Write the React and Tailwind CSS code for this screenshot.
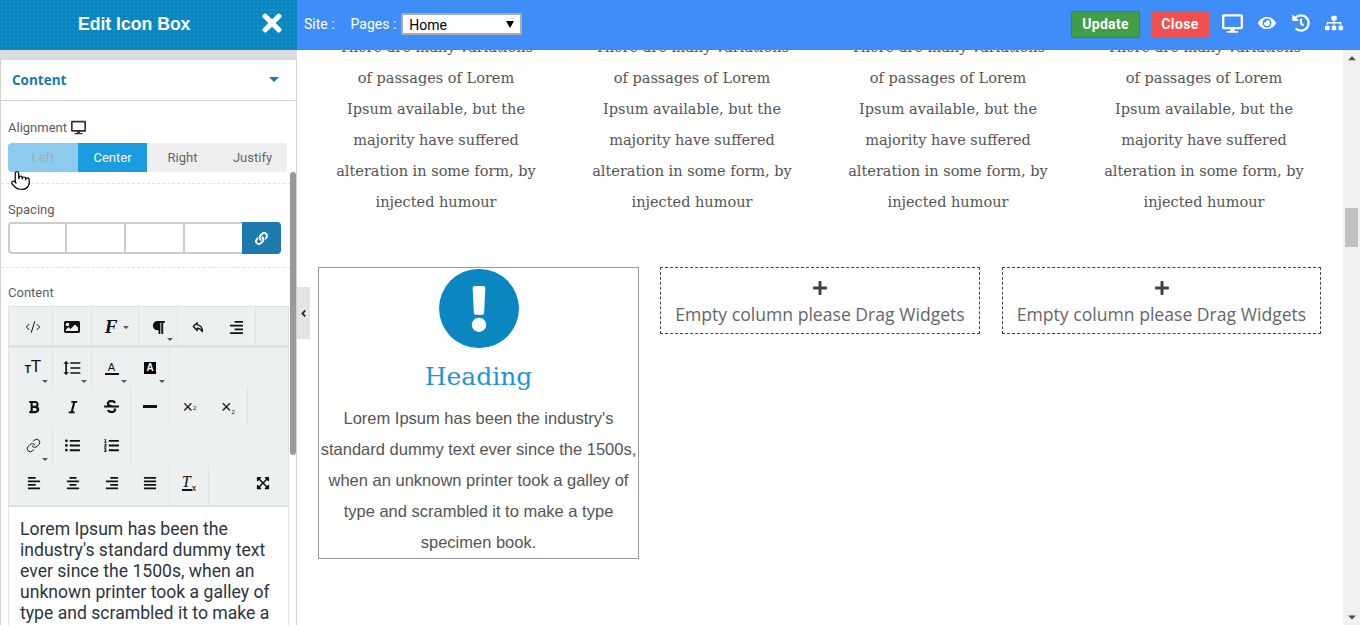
import { Code2, Pointer, Link as LinkIcon } from 'lucide-react'
import {
  FaTimes, FaDesktop, FaEye, FaHistory, FaSitemap, FaLink, FaImage, FaParagraph,
  FaAlignLeft, FaAlignCenter, FaAlignRight, FaAlignJustify, FaBold, FaItalic, FaStrikethrough,
  FaListUl, FaListOl, FaExpandArrowsAlt, FaPlus, FaExclamation, FaCaretDown, FaCaretUp, FaAngleLeft
} from 'react-icons/fa'
import { MdFormatLineSpacing } from 'react-icons/md'

const slabLines = [
  'There are many variations',
  'of passages of Lorem',
  'Ipsum available, but the',
  'majority have suffered',
  'alteration in some form, by',
  'injected humour',
]

const bodyLines = [
  "Lorem Ipsum has been the industry's",
  'standard dummy text ever since the 1500s,',
  'when an unknown printer took a galley of',
  'type and scrambled it to make a type',
  'specimen book.',
]

function Caret() {
  return <span className="absolute right-[4px] bottom-[4px] w-0 h-0 border-x-[3px] border-x-transparent border-t-[3px] border-t-[#555]" />
}

function Tool({ children, sep, wide, caret, className = '' }) {
  return (
    <div className={`relative flex items-center justify-center h-full text-[#111] ${wide ? 'w-[47px]' : 'w-[39px]'} ${sep ? 'border-r border-[#dfe2e2]' : ''} ${className}`}>
      {children}
      {caret && <Caret />}
    </div>
  )
}

function ToolRow({ children, className = '' }) {
  return <div className={`flex pl-[5px] h-[39px] ${className}`}>{children}</div>
}

function Toolbar() {
  return (
    <div className="mt-[6px] mx-[7px] w-[281px] bg-[#ecf0f1] border border-[#dfe2e2] border-b-0">
      <ToolRow className="border-b-[3px] border-[#dfe2e2] h-[41px]">
        <Tool sep className="pt-[2px]"><Code2 size={16} strokeWidth={1.5} /></Tool>
        <Tool sep className="pt-[2px]"><FaImage size={16} /></Tool>
        <Tool sep wide className="pt-[2px]">
          <span className="-ml-[8px] font-['Liberation_Serif',serif] italic font-bold text-[19px]">F</span>
          <span className="absolute right-[9px] top-[19px] w-0 h-0 border-x-[3px] border-x-transparent border-t-[3px] border-t-[#555]" />
        </Tool>
        <Tool sep caret className="pt-[2px]"><FaParagraph size={15} /></Tool>
        <Tool className="pt-[2px]">
          <svg width="12" height="12" viewBox="0 0 14 14" fill="none" stroke="currentColor" strokeWidth="1.6" strokeLinejoin="round">
            <path d="M6 2 L1.5 6.5 L6 11 V8.5 C8.5 8.5 10.5 9.5 12 12.5 C12.5 8 10 4.8 6 4.5 Z" />
          </svg>
        </Tool>
        <Tool sep className="pt-[2px]"><FaAlignRight size={15} /></Tool>
      </ToolRow>
      <ToolRow className="h-[37px]">
        <Tool sep caret>
          <span className="font-['Liberation_Sans',sans-serif] leading-none flex items-end -mt-[3px]">
            <span className="text-[10px] font-bold">T</span><span className="text-[17px]">T</span>
          </span>
        </Tool>
        <Tool sep caret><MdFormatLineSpacing size={20} /></Tool>
        <Tool caret>
          <span className="flex flex-col items-center font-['Liberation_Sans',sans-serif] text-[11px] leading-[12px] border-b-2 border-[#111] w-[14px]">A</span>
        </Tool>
        <Tool sep caret>
          <span className="flex items-center justify-center w-[12px] h-[12px] bg-black text-white font-bold font-['Liberation_Sans',sans-serif] text-[10px]">A</span>
        </Tool>
      </ToolRow>
      <ToolRow>
        <Tool><FaBold size={14} /></Tool>
        <Tool><FaItalic size={14} /></Tool>
        <Tool sep><FaStrikethrough size={15} /></Tool>
        <Tool sep><span className="w-[14px] h-[3px] bg-[#111]" /></Tool>
        <Tool>
          <span className="font-['Liberation_Sans',sans-serif] text-[18px] leading-none">×<sup className="text-[6px]">2</sup></span>
        </Tool>
        <Tool sep>
          <span className="font-['Liberation_Sans',sans-serif] text-[18px] leading-none">×<sub className="text-[6px]">2</sub></span>
        </Tool>
      </ToolRow>
      <ToolRow>
        <Tool sep caret><LinkIcon size={15} strokeWidth={1.6} /></Tool>
        <Tool><FaListUl size={15} /></Tool>
        <Tool sep><FaListOl size={15} /></Tool>
      </ToolRow>
      <ToolRow className="h-[40px]">
        <Tool className="pb-[4px]"><FaAlignLeft size={14} /></Tool>
        <Tool className="pb-[4px]"><FaAlignCenter size={14} /></Tool>
        <Tool className="pb-[4px]"><FaAlignRight size={14} /></Tool>
        <Tool sep className="pb-[4px]"><FaAlignJustify size={14} /></Tool>
        <Tool sep className="pb-[4px]">
          <span className="font-['Liberation_Serif',serif] italic text-[16px] leading-[14px] border-b-2 border-[#111] pr-[1px]">T</span>
          <span className="text-[9px] leading-none mt-[10px]">x</span>
        </Tool>
        <Tool className="ml-auto mr-[6px] pb-[4px]"><FaExpandArrowsAlt size={14} /></Tool>
      </ToolRow>
    </div>
  )
}

function Sidebar() {
  return (
    <aside className="relative w-[297px] shrink-0 h-[625px] overflow-hidden font-['Roboto',sans-serif]">
      <div className="h-[50px] pb-[2px] flex items-center bg-[#0786c2] bg-[radial-gradient(rgba(255,255,255,0.07)_1px,transparent_1px)] bg-[length:4px_4px] text-white">
        <h1 className="flex-1 pl-[78px] text-[17.6px] font-bold font-['Liberation_Sans',sans-serif]">Edit Icon Box</h1>
        <FaTimes size={28} className="mr-[11px] mb-[2px]" />
      </div>
      <div className="h-[10px] bg-[#dcdcdc]" />
      <div className="border-x border-[#d0d0d0] h-[565px]">
        <div className="h-[41px] flex items-center justify-between pl-[11px] pr-[17px] border-b border-[#d0d0d0]">
          <span className="text-[13.5px] font-bold text-[#1a7aaa] font-['Open_Sans',sans-serif]">Content</span>
          <span className="w-0 h-0 border-x-[5px] border-x-transparent border-t-[5px] border-t-[#1a7aaa] -mt-[2px]" />
        </div>

        <div className="pt-[19px] px-[7px] pb-[11px] border-b border-dashed border-[#e2e2e2]">
          <div className="flex items-center gap-[4px] h-[15px] text-[13px] text-[#5c5c5c]">
            Alignment <FaDesktop size={15} className="text-[#333]" />
          </div>
          <div className="mt-[8px] flex h-[29px] w-[279px] rounded-[4px] bg-[#eeeeee] overflow-hidden text-[13px] text-[#666]">
            <div className="w-[70px] flex items-center justify-center bg-[#8ccbed] text-[#aaa]">Left</div>
            <div className="w-[69px] flex items-center justify-center bg-[#1a9cde] text-white">Center</div>
            <div className="w-[71px] flex items-center justify-center">Right</div>
            <div className="w-[69px] flex items-center justify-center">Justify</div>
          </div>
        </div>

        <div className="pt-[18px] px-[7px] pb-[13px] border-b border-dashed border-[#e2e2e2]">
          <div className="h-[15px] flex items-center text-[13px] text-[#5c5c5c]">Spacing</div>
          <div className="mt-[5px] flex h-[32px] w-[273px]">
            <div className="w-[58px] border-2 border-r border-[#ccc] rounded-l-[4px]" />
            <div className="w-[59px] border-2 border-x border-[#ccc]" />
            <div className="w-[59px] border-2 border-x border-[#ccc]" />
            <div className="w-[58px] border-2 border-x border-r-0 border-[#ccc]" />
            <div className="w-[39px] flex items-center justify-center bg-[#1c7aad] text-white rounded-r-[4px]">
              <FaLink size={13} />
            </div>
          </div>
        </div>

        <div className="pt-[17px]">
          <div className="h-[15px] pl-[7px] flex items-center text-[13px] text-[#5c5c5c]">Content</div>
          <Toolbar />
          <div className="mx-[7px] w-[281px] border-x border-t-2 border-[#dfe2e2] px-[11px] pt-[12px] text-[17.6px] leading-[21px] text-[#2c3440] h-[140px]">
            Lorem Ipsum has been the industry's standard dummy text ever since the 1500s, when an unknown printer took a galley of type and scrambled it to make a
          </div>
        </div>
      </div>

      {/* panel scrollbar and the mouse pointer lie over the panel */}
      <div className="absolute left-[290px] top-[172px] w-[6px] h-[283px] rounded-[3px] bg-[#999999]" />
      <Pointer size={21} strokeWidth={1.4} fill="#fff" className="absolute left-[10px] top-[170px] text-black" />
    </aside>
  )
}

function SlabColumn() {
  return (
    <div className="text-center">
      {slabLines.map(line => <div key={line} className="h-[31px] leading-[31px]">{line}</div>)}
    </div>
  )
}

function EmptyColumn({ className = '' }) {
  return (
    <div className={`h-[67px] flex flex-col items-center border border-dashed border-[#444] font-['Open_Sans',sans-serif] ${className}`}>
      <FaPlus size={16} className="mt-[12px] text-[#444]" />
      <div className="mt-[6px] text-[17.6px] leading-[24px] text-[#666]">Empty column please Drag Widgets</div>
    </div>
  )
}

function Main() {
  return (
    <div className="flex-1 min-w-0 flex flex-col h-[625px]">
      <header className="h-[50px] pb-[2px] shrink-0 flex items-center bg-[#3f8ef7] text-white font-['Roboto',sans-serif] text-[14px] pl-[7px]">
        <span>Site :</span>
        <span className="ml-[16px]">Pages :</span>
        <div className="relative ml-[5px]">
          <select defaultValue="Home" className="block appearance-none w-[121px] h-[22px] pl-[6px] bg-white text-black border-2 border-[#aaa] text-[14px] font-['Roboto',sans-serif]">
            <option>Home</option>
          </select>
          <span className="absolute right-[8px] top-[8px] w-0 h-0 border-x-[4px] border-x-transparent border-t-[7px] border-t-black" />
        </div>
        <button className="ml-auto w-[69px] h-[27px] rounded-[2px] bg-[#419e44] border border-[#378a3a] font-bold text-[14px] tracking-[0.3px]">Update</button>
        <button className="ml-[11px] w-[58px] h-[27px] rounded-[3px] bg-[#f15050] font-bold text-[14px] tracking-[0.4px]">Close</button>
        <FaDesktop size={21} className="ml-[13px] mb-[2px]" />
        <FaEye size={18} className="ml-[15px] mb-[2px]" />
        <FaHistory size={18} className="ml-[16px] mb-[2px]" />
        <FaSitemap size={18} className="ml-[15px] mr-[17px] mb-[2px]" />
      </header>

      <div className="relative flex-1 min-h-0 flex overflow-hidden">
        <div className="flex-1 min-w-0 -mt-[18px]">
          <div className="grid grid-cols-[repeat(4,256px)] pl-[11px] font-['DejaVu_Serif',serif] text-[14.5px] text-[#555]">
            <SlabColumn />
            <SlabColumn />
            <SlabColumn />
            <SlabColumn />
          </div>
          <div className="mt-[49px] ml-[21px] grid grid-cols-[321px_320px_320px] gap-x-[21px] items-start">
            <div className="h-[292px] border border-[#999] flex flex-col items-center">
              <div className="mt-[1px] w-[80px] h-[80px] rounded-full bg-[#0a87c1] flex items-center justify-center text-white">
                <FaExclamation size={46} />
              </div>
              <h2 className="mt-[11px] h-[36px] leading-[36px] font-['DejaVu_Serif',serif] text-[25px] text-[#2196d3]">Heading</h2>
              <div className="mt-[8px] text-center font-['Liberation_Sans',sans-serif] text-[16.5px] text-[#555] whitespace-nowrap">
                {bodyLines.map(line => <div key={line} className="h-[31px] leading-[31px]">{line}</div>)}
              </div>
            </div>
            <EmptyColumn />
            <EmptyColumn className="ml-[1px]" />
          </div>
        </div>

        {/* page scrollbar */}
        <div className="w-[17px] shrink-0 bg-[#f1f1f1] flex flex-col items-center text-[#505050]">
          <FaCaretUp size={12} className="mt-[2px]" />
          <div className="mt-[144px] w-[13px] h-[39px] bg-[#c1c1c1]" />
          <FaCaretDown size={12} className="mt-auto mb-[2px]" />
        </div>

        <div className="absolute left-0 top-[237px] w-[13px] h-[52px] bg-[#e4e4e4] flex items-center justify-center text-[#222]">
          <FaAngleLeft size={11} />
        </div>
      </div>
    </div>
  )
}

export default function App() {
  return (
    <div className="flex w-[1360px] h-[625px] overflow-hidden bg-white">
      <Sidebar />
      <Main />
    </div>
  )
}
